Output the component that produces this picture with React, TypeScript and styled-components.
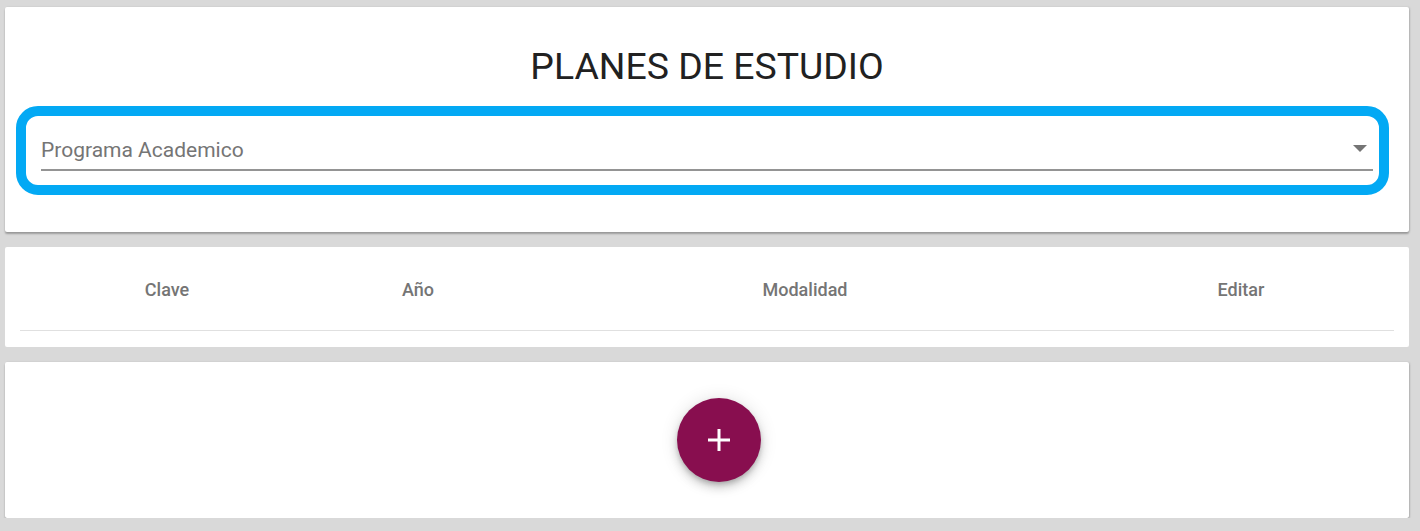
import React from "react";
import styled, { createGlobalStyle } from "styled-components";

const Global = createGlobalStyle`
  html, body { margin: 0; padding: 0; background: #d9d9d9; }
  body { font-family: Roboto, "Noto Sans", Arial, sans-serif; }
  * { box-sizing: border-box; }
`;

const Page = styled.div`
  display: flex;
  flex-direction: column;
  gap: 15px;
  padding: 7px 11px 0 5px;
`;

const Card = styled.section<{ $flat?: boolean; $h: number }>`
  background: #fff;
  border-radius: 2px;
  height: ${(p) => p.$h}px;
  box-shadow: ${(p) =>
    p.$flat ? "none" : "0 2px 2px 0 rgba(0,0,0,0.28), 1px 0 2px 0 rgba(0,0,0,0.12)"};
`;

const HeaderCard = styled(Card)`
  display: flex;
  flex-direction: column;
  padding-top: 37px;
`;

const Title = styled.h1`
  margin: 0 0 18px;
  text-align: center;
  font-weight: 400;
  font-size: 37.4px;
  line-height: 44px;
  color: #212121;
`;

const Highlight = styled.div`
  margin: 0 20px 0 11px;
  height: 89px;
  border: 10px solid #03a9f4;
  border-radius: 22px;
  padding: 0 6px 0 15px;
`;

const SelectField = styled.div`
  position: relative;
  padding-top: 22px;
`;

const SelectText = styled.div`
  font-size: 21px;
  line-height: 24px;
  color: #757575;
  padding-bottom: 7px;
  border-bottom: 2px solid #949494;
`;

const Arrow = styled.span`
  position: absolute;
  right: 6px;
  top: 29px;
  width: 0;
  height: 0;
  border-left: 7px solid transparent;
  border-right: 7px solid transparent;
  border-top: 7px solid #757575;
`;

const TableCard = styled(Card)`
  padding: 0 15px;
`;

const HeadRow = styled.div`
  display: grid;
  grid-template-columns: 294fr 208fr 566fr 306fr;
  height: 84px;
  align-items: center;
  border-bottom: 1px solid #e0e0e0;
`;

const HeadCell = styled.div`
  text-align: center;
  font-size: 18px;
  font-weight: 500;
  color: #757575;
  padding-top: 2px;
`;

const ActionCard = styled(Card)`
  display: flex;
  align-items: center;
  justify-content: center;
  padding-left: 24px;
`;

const Fab = styled.button`
  width: 84px;
  height: 84px;
  border-radius: 50%;
  border: none;
  background: #880e4f;
  display: flex;
  align-items: center;
  justify-content: center;
  padding: 0;
  box-shadow: 0 3px 5px -1px rgba(0,0,0,0.2), 0 6px 10px 0 rgba(0,0,0,0.14), 0 1px 18px 0 rgba(0,0,0,0.12);
  cursor: pointer;
`;

export default function App() {
  return (
    <>
      <Global />
      <Page>
        <HeaderCard $h={225}>
          <Title>PLANES DE ESTUDIO</Title>
          <Highlight>
            <SelectField>
              <SelectText>Programa Academico</SelectText>
              <Arrow />
            </SelectField>
          </Highlight>
        </HeaderCard>
        <TableCard $flat $h={100}>
          <HeadRow>
            <HeadCell>Clave</HeadCell>
            <HeadCell>Año</HeadCell>
            <HeadCell>Modalidad</HeadCell>
            <HeadCell>Editar</HeadCell>
          </HeadRow>
        </TableCard>
        <ActionCard $h={156}>
          <Fab aria-label="Agregar">
            <svg width="22" height="22" viewBox="0 0 22 22">
              <rect x="9.5" y="0" width="3" height="22" fill="#fff" />
              <rect x="0" y="9.5" width="22" height="3" fill="#fff" />
            </svg>
          </Fab>
        </ActionCard>
      </Page>
    </>
  );
}
